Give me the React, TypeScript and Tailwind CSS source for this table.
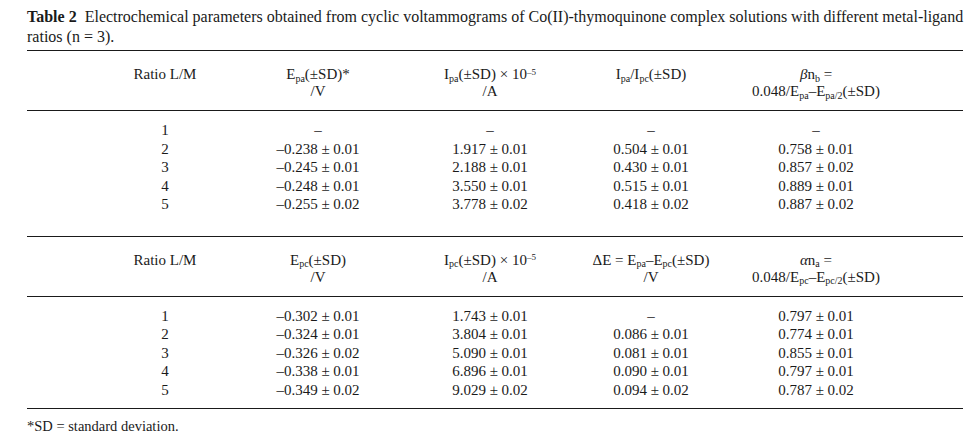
import React from "react";

type Cell = React.ReactNode;

const Pa = () => <sub className="text-[10px]">pa</sub>;
const Pc = () => <sub className="text-[10px]">pc</sub>;

const cols = "grid grid-cols-[130px_176px_168px_154px_176px] pl-[73px] text-center";

const Rule = () => <div className="h-px bg-[#1a1a1a]" />;

const Section = ({
  head1,
  head2,
  rows,
  top,
}: {
  head1: Cell[];
  head2: Cell[];
  rows: string[][];
  top: string;
}) => (
  <div className={top}>
    <Rule />
    <div className={`${cols} leading-[17px] pt-[15px] pb-[10px]`}>
      {head1.map((c, i) => (
        <div key={i}>{c}</div>
      ))}
      {head2.map((c, i) => (
        <div key={i}>{c}</div>
      ))}
    </div>
    <Rule />
    <div className={`${cols} leading-[18.5px] pt-[10px]`}>
      {rows.map((r) => r.map((c, i) => <div key={r[0] + i}>{c}</div>))}
    </div>
  </div>
);

export default function App() {
  return (
    <div className="w-[972px] h-[436px] bg-white pl-[27px] pr-[9px] pt-[7px] text-[15px] text-[#1a1a1a] font-['Liberation_Serif',serif]">
      <p className="text-[16px] leading-[20px] mb-[3px]">
        <span className="whitespace-nowrap">
          <b>Table 2</b>&nbsp; Electrochemical parameters obtained from cyclic voltammograms of Co(II)-thymoquinone complex
          solutions with different metal-ligand
        </span>
        <br />
        ratios (n = 3).
      </p>

      <Section
        top=""
        head1={[
          "Ratio L/M",
          <>E<Pa />(±SD)*</>,
          <>I<Pa />(±SD) × 10<sup className="text-[9px]">–5</sup></>,
          <>I<Pa />/I<Pc />(±SD)</>,
          <><i>β</i>n<sub className="text-[10px]">b</sub> =</>,
        ]}
        head2={[
          "",
          "/V",
          "/A",
          "",
          <>0.048/E<Pa />–E<sub className="text-[10px]">pa/2</sub>(±SD)</>,
        ]}
        rows={[
          ["1", "–", "–", "–", "–"],
          ["2", "–0.238 ± 0.01", "1.917 ± 0.01", "0.504 ± 0.01", "0.758 ± 0.01"],
          ["3", "–0.245 ± 0.01", "2.188 ± 0.01", "0.430 ± 0.01", "0.857 ± 0.02"],
          ["4", "–0.248 ± 0.01", "3.550 ± 0.01", "0.515 ± 0.01", "0.889 ± 0.01"],
          ["5", "–0.255 ± 0.02", "3.778 ± 0.02", "0.418 ± 0.02", "0.887 ± 0.02"],
        ]}
      />

      <Section
        top="mt-[22px]"
        head1={[
          "Ratio L/M",
          <>E<Pc />(±SD)</>,
          <>I<Pc />(±SD) × 10<sup className="text-[9px]">–5</sup></>,
          <>ΔE = E<Pa />–E<Pc />(±SD)</>,
          <><i>α</i>n<sub className="text-[10px]">a</sub> =</>,
        ]}
        head2={[
          "",
          "/V",
          "/A",
          "/V",
          <>0.048/E<Pc />–E<sub className="text-[10px]">pc/2</sub>(±SD)</>,
        ]}
        rows={[
          ["1", "–0.302 ± 0.01", "1.743 ± 0.01", "–", "0.797 ± 0.01"],
          ["2", "–0.324 ± 0.01", "3.804 ± 0.01", "0.086 ± 0.01", "0.774 ± 0.01"],
          ["3", "–0.326 ± 0.02", "5.090 ± 0.01", "0.081 ± 0.01", "0.855 ± 0.01"],
          ["4", "–0.338 ± 0.01", "6.896 ± 0.01", "0.090 ± 0.01", "0.797 ± 0.01"],
          ["5", "–0.349 ± 0.02", "9.029 ± 0.02", "0.094 ± 0.02", "0.787 ± 0.02"],
        ]}
      />

      <div className="mt-[9px]">
        <Rule />
      </div>
      <p className="text-[14.5px] leading-[18px] mt-[8px]">*SD = standard deviation.</p>
    </div>
  );
}
